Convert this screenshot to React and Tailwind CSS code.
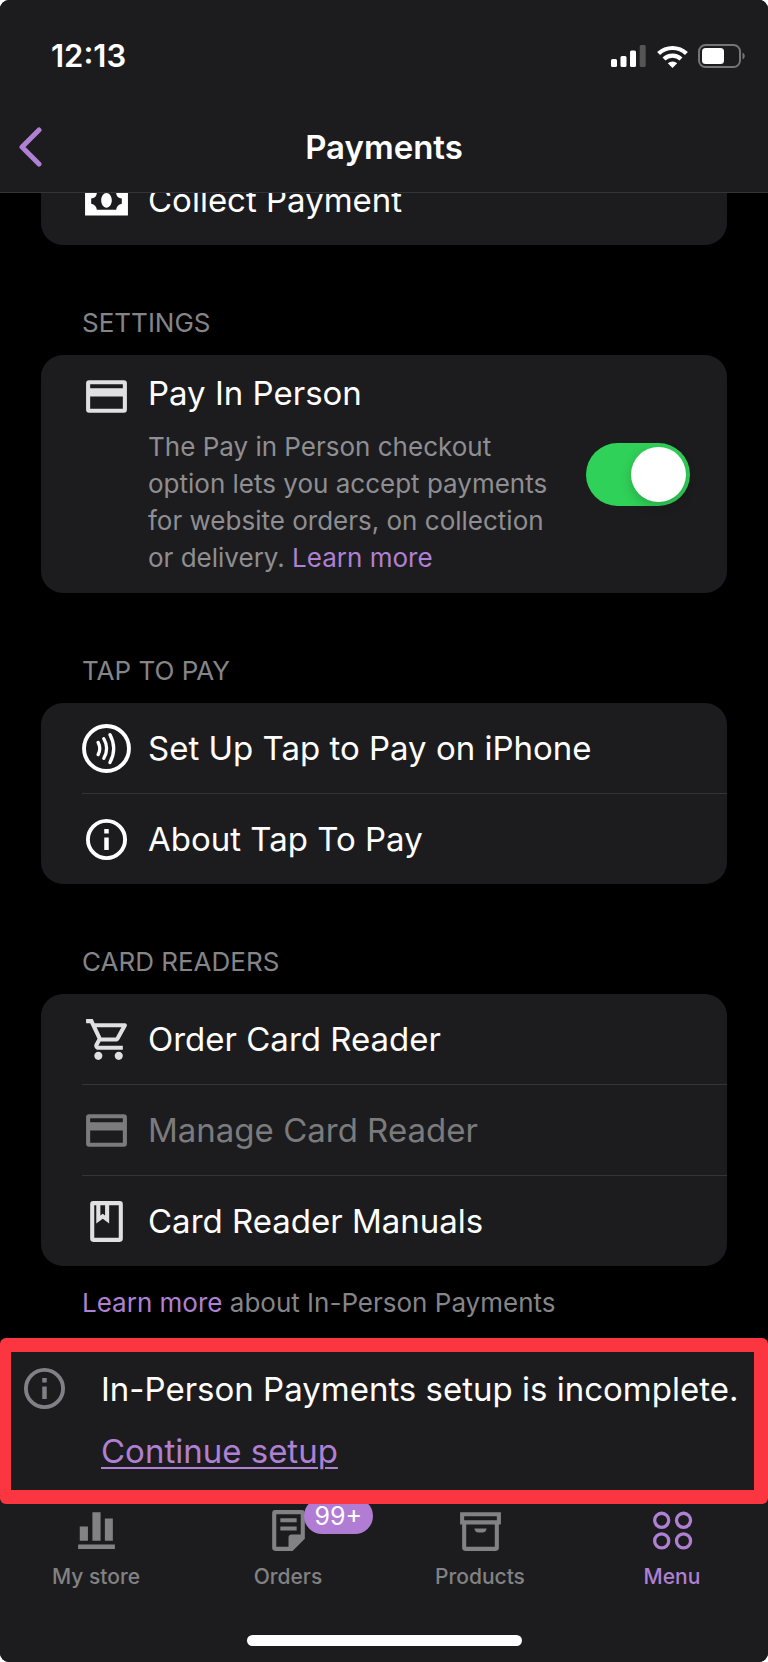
import React, { useState } from 'react';

function Icon({ children, className = '' }) {
  return (
    <svg viewBox="0 0 24 24" fill="currentColor" aria-hidden="true" className={`w-[49px] h-[49px] shrink-0 ${className}`}>
      {children}
    </svg>
  );
}

const MoneyIcon = () => (
  <Icon>
    <path
      fillRule="evenodd"
      d="M1.5 4.7h21v14.6h-21zM7.3 8.3a3 3 0 0 1-2.8 2.7v2.6a3.5 3.5 0 0 1 2.8 2.9h9.4a3.5 3.5 0 0 1 2.8-2.9v-2.6a3 3 0 0 1-2.8-2.7zM12 8.3c1.5 0 2.6 1.6 2.6 3.6s-1.1 3.6-2.6 3.6-2.6-1.6-2.6-3.6 1.1-3.6 2.6-3.6z"
    />
  </Icon>
);

const CardIcon = ({ className }) => (
  <Icon className={className}>
    <path
      fillRule="evenodd"
      d="M3.5 4h17A1.5 1.5 0 0 1 22 5.5v13a1.5 1.5 0 0 1-1.5 1.5h-17A1.5 1.5 0 0 1 2 18.5v-13A1.5 1.5 0 0 1 3.5 4zM4 6v2h16V6zM4 12v6h16v-6z"
    />
  </Icon>
);

const TapIcon = () => (
  <Icon>
    <g fill="none" stroke="currentColor" strokeLinecap="round">
      <circle cx="12" cy="12" r="11" strokeWidth="1.9" />
      <path strokeWidth="1.6" d="M7.9 9c1 1.9 1 4.2 0 6M10.7 7.2c1.7 3 1.7 6.6 0 9.6M13.7 5.2c2.3 4.3 2.3 9.4 0 13.7" />
    </g>
  </Icon>
);

const InfoIcon = ({ className }) => (
  <Icon className={className}>
    <circle cx="12" cy="12" r="9.1" fill="none" stroke="currentColor" strokeWidth="1.9" />
    <path d="M10.9 6.9h2.2v2.1h-2.2zM10.9 11h2.2v6.2h-2.2z" />
  </Icon>
);

const CartIcon = ({ className }) => (
  <Icon className={className}>
    <path
      transform="translate(1 0)"
      d="M15.55 13c.75 0 1.41-.41 1.75-1.03l3.58-6.49A.996.996 0 0 0 20.01 4H5.21l-.94-2H1v2h2l3.6 7.59-1.35 2.44C4.52 15.37 5.48 17 7 17h12v-2H7l1.1-2h7.45zM6.16 6h12.15l-2.76 5H8.53L6.16 6zM7 18c-1.1 0-1.99.9-1.99 2S5.9 22 7 22s2-.9 2-2-.9-2-2-2zm10 0c-1.1 0-1.99.9-1.99 2s.89 2 1.99 2 2-.9 2-2-.9-2-2-2z"
    />
  </Icon>
);

const ManualIcon = ({ className }) => (
  <Icon className={className}>
    <path
      fillRule="evenodd"
      d="M5.5 2h13A1.5 1.5 0 0 1 20 3.5v17a1.5 1.5 0 0 1-1.5 1.5h-13A1.5 1.5 0 0 1 4 20.5v-17A1.5 1.5 0 0 1 5.5 2zM6 4v16h12V4h-4.7v9l-3.15-2.3L7 13V4zM9 4v5l1.15-.8L11.3 9V4z"
    />
  </Icon>
);

const StoreIcon = () => (
  <Icon>
    <path d="M3.8 10h4v7h-4zM10 3h4v14h-4zM16.1 6.1h3.9v10.9h-3.9zM3 18.8h18V21H3z" />
  </Icon>
);

const OrdersIcon = () => (
  <Icon>
    <path
      fillRule="evenodd"
      d="M5.5 2h13A1.5 1.5 0 0 1 20 3.5V16l-6 6H5.5A1.5 1.5 0 0 1 4 20.5v-17A1.5 1.5 0 0 1 5.5 2zM6 4v16h6v-4.5a1.5 1.5 0 0 1 1.5-1.5H18V4z"
    />
    <path d="M8 6h8v2H8zM8 10h8v2H8z" />
  </Icon>
);

const ProductsIcon = () => (
  <Icon>
    <path
      fillRule="evenodd"
      d="M2 3h20v6h-1v11.5a1.5 1.5 0 0 1-1.5 1.5h-15A1.5 1.5 0 0 1 3 20.5V9H2zM4 5v2h16V5zM5 9v11h14V9z"
    />
    <path d="M9 11h6c-.2 1.3-.9 2-2 2h-2c-1.1 0-1.8-.7-2-2z" />
  </Icon>
);

const MenuIcon = () => (
  <Icon>
    <g fill="none" stroke="currentColor" strokeWidth="1.6">
      <circle cx="6.7" cy="7" r="3.45" />
      <circle cx="17.4" cy="7" r="3.45" />
      <circle cx="6.7" cy="17.1" r="3.45" />
      <circle cx="17.4" cy="17.1" r="3.45" />
    </g>
  </Icon>
);

function StatusBar() {
  return (
    <div className="flex h-28 items-center justify-between pl-[51px] pr-[21px]">
      <span className="text-[31px] leading-10 font-semibold">12:13</span>
      <div className="flex items-center gap-[10px]">
        <svg viewBox="0 0 36 22" className="w-9 h-[22px]" fill="currentColor" aria-hidden="true">
          <rect x="0" y="14" width="6" height="8" rx="1.5" />
          <rect x="9.5" y="11" width="6" height="11" rx="1.5" />
          <rect x="19" y="5.5" width="6" height="16.5" rx="1.5" />
          <rect x="28.7" y="0" width="6" height="22" rx="1.5" opacity="0.25" />
        </svg>
        <svg viewBox="0 0 31 23" className="w-[31px] h-[23px]" fill="none" stroke="currentColor" aria-hidden="true">
          <path strokeWidth="4.2" d="M1.6 8.6a20 20 0 0 1 27.8 0" />
          <path strokeWidth="4.2" d="M7 14a12.2 12.2 0 0 1 17 0" />
          <path stroke="none" fill="currentColor" d="M15.5 23l-4.7-4.7a6.8 6.8 0 0 1 9.4 0z" />
        </svg>
        <svg viewBox="0 0 49 24" className="w-[49px] h-6" aria-hidden="true">
          <rect x="1" y="1" width="41" height="22" rx="6.5" fill="none" stroke="#757577" strokeWidth="2" />
          <rect x="4" y="4" width="22" height="16" rx="3.5" fill="white" />
          <path d="M44.5 8.5c3 1.5 3 5.5 0 7z" fill="#757577" />
        </svg>
      </div>
    </div>
  );
}

function Section({ title, children }) {
  return (
    <section>
      <h2 className="pt-[62px] pb-4 pl-[41px] text-[26px] leading-8 text-[#858588] uppercase">{title}</h2>
      <div className="rounded-[22px] bg-[#1c1c1e]">{children}</div>
    </section>
  );
}

function Row({ icon, label, disabled, divider }) {
  return (
    <div className="pl-[41px]">
      <button
        type="button"
        disabled={disabled}
        className={`flex w-full h-[90px] box-content items-center gap-[17px] text-left text-[33px] leading-[42px] disabled:text-[#7b7b7d] ${
          divider ? 'border-b border-[#343436]' : ''
        }`}
      >
        {icon}
        {label}
      </button>
    </div>
  );
}

function Tab({ icon, label, badge, active }) {
  return (
    <a href="#" className={`flex flex-col items-center gap-2 ${active ? 'text-[#af80d3]' : 'text-[#828284]'}`}>
      <span className="relative">
        {icon}
        {badge && (
          <span className="absolute -top-2 left-10 h-9 rounded-full bg-[#b07cd4] px-[11px] text-[25px] leading-9 text-white">
            {badge}
          </span>
        )}
      </span>
      <span className="text-[21px] leading-7 font-medium">{label}</span>
    </a>
  );
}

export default function App() {
  const [payInPerson, setPayInPerson] = useState(true);

  return (
    <div className="bg-white">
      <div className="flex min-h-screen flex-col rounded-[9px] bg-black font-['Inter',sans-serif] text-white">
        <header className="relative z-10 rounded-t-[9px] border-b border-[#343436] bg-[#1c1c1e]">
          <StatusBar />
          <div className="grid grid-cols-3 items-center px-[18px] pt-[14px] pb-[24px]">
            <button type="button" aria-label="Back" className="w-6 text-[#af80d3]">
              <svg viewBox="0 0 24 42" className="w-6 h-[42px]" fill="none" stroke="currentColor" strokeWidth="5" strokeLinecap="round" strokeLinejoin="round">
                <path d="M21 4L4 21l17 17" />
              </svg>
            </button>
            <h1 className="text-center text-[33px] leading-[42px] font-semibold">Payments</h1>
          </div>
        </header>

        <main className="flex-1 px-[41px]">
          {/* first card is scrolled partly under the header */}
          <div className="-mt-[38px] rounded-[22px] bg-[#1c1c1e]">
            <Row icon={<MoneyIcon />} label="Collect Payment" />
          </div>

          <Section title="Settings">
            <div className="flex items-center justify-between pt-[17px] pr-[37px] pb-[17px] pl-[41px]">
              <div className="flex items-start gap-[17px]">
                <CardIcon className="text-[#e0e0e3]" />
                <div>
                  <label htmlFor="pay-in-person" className="block text-[33px] leading-[42px]">Pay In Person</label>
                  <p className="mt-[14px] max-w-[412px] text-[26px] leading-[37px] text-[#8e8e93]">
                    The Pay in Person checkout option lets you accept payments for website orders, on collection or delivery.{' '}
                    <a href="#" className="text-[#af80d3]">Learn more</a>
                  </p>
                </div>
              </div>
              <input
                id="pay-in-person"
                type="checkbox"
                role="switch"
                checked={payInPerson}
                onChange={(e) => setPayInPerson(e.target.checked)}
                className="flex h-[63px] w-[104px] shrink-0 appearance-none items-center rounded-full bg-[#39393d] px-1 before:size-[55px] before:rounded-full before:bg-white before:shadow-[0_4px_12px_rgba(0,0,0,0.2)] checked:justify-end checked:bg-[#30d158]"
              />
            </div>
          </Section>

          <Section title="Tap to Pay">
            <Row icon={<TapIcon />} label="Set Up Tap to Pay on iPhone" divider />
            <Row icon={<InfoIcon />} label="About Tap To Pay" />
          </Section>

          <Section title="Card Readers">
            <Row icon={<CartIcon className="text-[#e0e0e3]" />} label="Order Card Reader" divider />
            <Row icon={<CardIcon />} label="Manage Card Reader" disabled divider />
            <Row icon={<ManualIcon className="text-[#e0e0e3]" />} label="Card Reader Manuals" />
          </Section>

          <p className="pt-[21px] pb-[19px] pl-[41px] text-[26px] leading-8 text-[#858588]">
            <a href="#" className="text-[#af80d3]">Learn more</a> about In-Person Payments
          </p>
        </main>

        <div className="relative z-10 rounded-[6px] bg-[#fb3640] py-[14px] pr-[14px] pl-[11px]">
          <div className="flex items-start gap-8 bg-[#1c1c1e] pt-3 pb-[18px] pl-[9px]">
            <InfoIcon className="text-[#808086]" />
            <div className="pt-1 text-[33px] leading-[42px]">
              <p>In-Person Payments setup is incomplete.</p>
              <a href="#" className="mt-5 block text-[#af80d3] underline decoration-2 underline-offset-4">Continue setup</a>
            </div>
          </div>
        </div>

        <footer className="-mt-[6px] rounded-b-[9px] bg-[#1c1c1e] pt-2 pb-4">
          <nav className="grid grid-cols-4">
            <Tab icon={<StoreIcon />} label="My store" />
            <Tab icon={<OrdersIcon />} label="Orders" badge="99+" />
            <Tab icon={<ProductsIcon />} label="Products" />
            <Tab icon={<MenuIcon />} label="Menu" active />
          </nav>
          <div className="mx-auto mt-11 h-[11px] w-[275px] rounded-full bg-white" />
        </footer>
      </div>
    </div>
  );
}
